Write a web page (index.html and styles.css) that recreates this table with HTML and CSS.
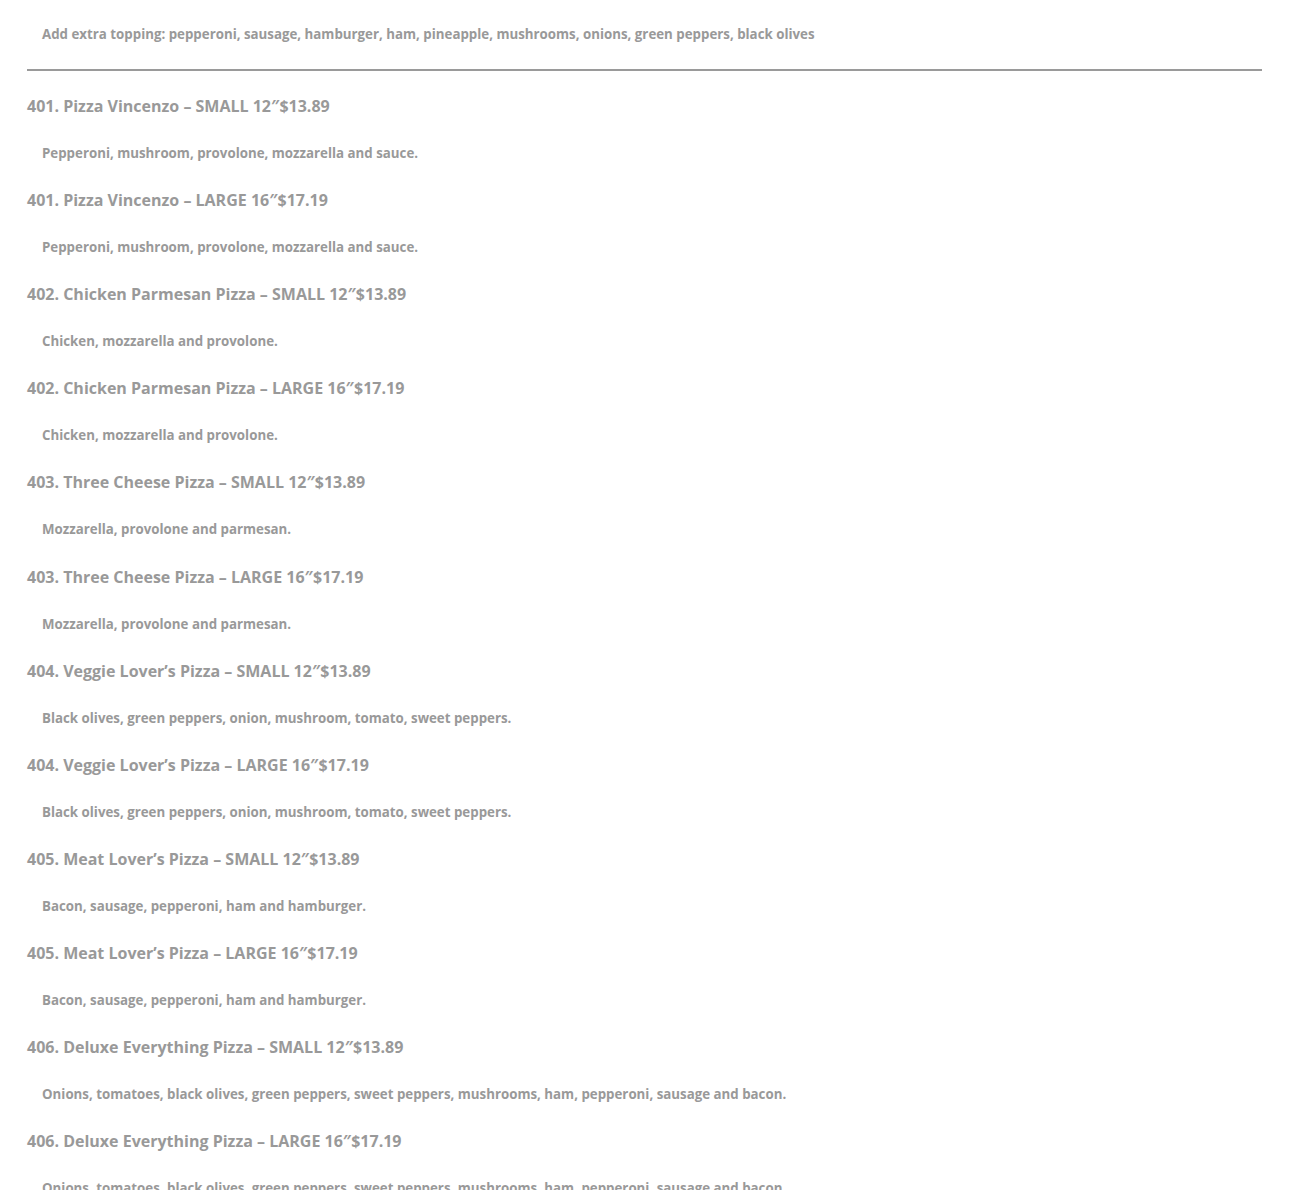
FILE: index.html
```html
<!DOCTYPE html>
<html>
<head>
    <title>Pizza Menu</title>
    <link rel="stylesheet" href="styles.css">
</head>
<body>
    <div class="menu">
        <p class="desc first">Add extra topping: pepperoni, sausage, hamburger, ham, pineapple, mushrooms, onions, green peppers, black olives</p>
        <hr class="divider">

        <h3 class="item">401. Pizza Vincenzo – SMALL 12″$13.89</h3>
        <p class="desc">Pepperoni, mushroom, provolone, mozzarella and sauce.</p>
        <h3 class="item">401. Pizza Vincenzo – LARGE 16″$17.19</h3>
        <p class="desc">Pepperoni, mushroom, provolone, mozzarella and sauce.</p>

        <h3 class="item">402. Chicken Parmesan Pizza – SMALL 12″$13.89</h3>
        <p class="desc">Chicken, mozzarella and provolone.</p>
        <h3 class="item">402. Chicken Parmesan Pizza – LARGE 16″$17.19</h3>
        <p class="desc">Chicken, mozzarella and provolone.</p>

        <h3 class="item">403. Three Cheese Pizza – SMALL 12″$13.89</h3>
        <p class="desc">Mozzarella, provolone and parmesan.</p>
        <h3 class="item">403. Three Cheese Pizza – LARGE 16″$17.19</h3>
        <p class="desc">Mozzarella, provolone and parmesan.</p>

        <h3 class="item">404. Veggie Lover’s Pizza – SMALL 12″$13.89</h3>
        <p class="desc">Black olives, green peppers, onion, mushroom, tomato, sweet peppers.</p>
        <h3 class="item">404. Veggie Lover’s Pizza – LARGE 16″$17.19</h3>
        <p class="desc">Black olives, green peppers, onion, mushroom, tomato, sweet peppers.</p>

        <h3 class="item">405. Meat Lover’s Pizza – SMALL 12″$13.89</h3>
        <p class="desc">Bacon, sausage, pepperoni, ham and hamburger.</p>
        <h3 class="item">405. Meat Lover’s Pizza – LARGE 16″$17.19</h3>
        <p class="desc">Bacon, sausage, pepperoni, ham and hamburger.</p>

        <h3 class="item">406. Deluxe Everything Pizza – SMALL 12″$13.89</h3>
        <p class="desc">Onions, tomatoes, black olives, green peppers, sweet peppers, mushrooms, ham, pepperoni, sausage and bacon.</p>
        <h3 class="item">406. Deluxe Everything Pizza – LARGE 16″$17.19</h3>
        <p class="desc">Onions, tomatoes, black olives, green peppers, sweet peppers, mushrooms, ham, pepperoni, sausage and bacon.</p>
    </div>
</body>
</html>
```
FILE: styles.css
```css
body {
    margin: 0;
    background: #fff;
    font-family: "Open Sans", "Liberation Sans", sans-serif;
    font-weight: 700;
    color: #999;
}

.menu {
    padding: 0 28px 0 27px;
}

.desc {
    margin: 25px 0;
    padding-left: 15px;
    font-size: 13.3px;
    line-height: 20.1px;
}

.desc.first {
    margin-top: 24px;
}

.divider {
    margin: 23px 0 23px;
    border: none;
    border-top: 2px solid #9a9a9a;
}

.item {
    margin: 0;
    font-size: 16px;
    font-weight: 700;
    line-height: 24px;
}
```
